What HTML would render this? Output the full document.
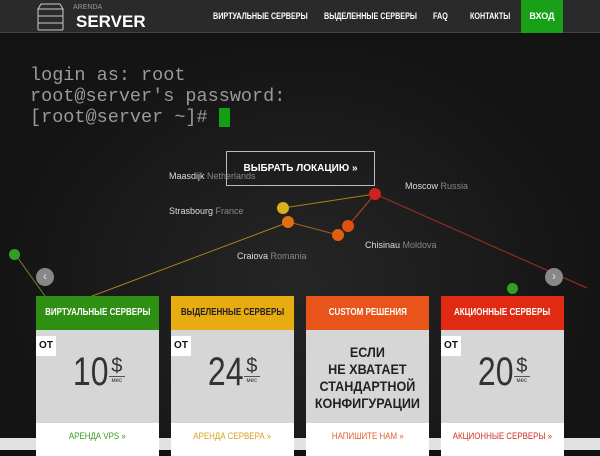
<!DOCTYPE html>
<html><head><meta charset="utf-8"><style>
*{margin:0;padding:0;box-sizing:border-box}
body{width:600px;height:450px;overflow:hidden;background:#111;font-family:"Liberation Sans",sans-serif;position:relative}
.hdr{position:absolute;left:0;top:0;width:600px;height:33px;background:#2a2a2a;border-bottom:1px solid #444}
.nav{position:absolute;top:0;height:33px;line-height:33px;color:#fff;font-weight:bold;font-size:9px;white-space:nowrap;transform:scaleX(.8);transform-origin:left}
.hero{position:absolute;left:0;top:34px;width:600px;height:416px;background:radial-gradient(ellipse at 50% 60%,#262626,#141414 70%)}
.term{position:absolute;left:30px;font-family:"Liberation Mono",monospace;color:#9a9a9a;font-size:18.5px}
.lbl{position:absolute;font-size:9px;color:#ddd;white-space:nowrap}
.lbl span{color:#888}
.dot{position:absolute;width:12px;height:12px;border-radius:50%}
.card{position:absolute;top:296px;width:123px;height:160px;background:#d6d6d6}
.card .h{height:34px;line-height:34px;text-align:center;color:#fff;font-weight:bold;font-size:10px;white-space:nowrap;overflow:hidden}
.card .h span{display:inline-block;transform:scaleX(.8);margin:0 -20px}
.card .f{position:absolute;top:127px;left:0;width:123px;height:33px;background:#fff;text-align:center;font-size:9px;line-height:26px;white-space:nowrap}
.card .f span{display:inline-block;transform:scaleX(.88)}
.ot{position:absolute;left:0;top:40px;width:20px;height:20px;background:#fff;font-weight:bold;font-size:10px;line-height:20px;text-align:center;color:#111}
.price{position:absolute;top:56px;left:0;width:123px;text-align:center;color:#333;white-space:nowrap}
.num{display:inline-block;font-size:40px;transform:scaleX(.8);transform-origin:right;vertical-align:top;line-height:40px;margin-left:-6px}
.dol{display:inline-block;vertical-align:top;width:16px;text-align:center;margin-top:4px}
.dol b{display:block;font-weight:normal;font-size:20px;line-height:20px;border-bottom:1px solid #555}
.dol i{display:block;font-style:normal;font-size:6px;line-height:9px}
.arr{position:absolute;width:18px;height:18px;border-radius:50%;background:#888;color:#ddd;font-size:12px;text-align:center;line-height:17px;top:268px}
</style></head><body>
<div class="hero">
<svg width="600" height="416" style="position:absolute;left:0;top:0">
<g stroke-width="1" fill="none">
<line x1="15" y1="220" x2="55" y2="276" stroke="#6a8a20"/>
<line x1="55" y1="276" x2="289" y2="188" stroke="#a87c20"/>
<line x1="283" y1="174" x2="375" y2="160" stroke="#a88020"/>
<line x1="375" y1="160" x2="348" y2="192" stroke="#c04020"/>
<line x1="375" y1="160" x2="587" y2="254" stroke="#a03020"/>
<line x1="289" y1="188" x2="338" y2="201" stroke="#a06020"/>
</g></svg>
</div>
<div class="hdr">
<svg style="position:absolute;left:37px;top:3px" width="27" height="28" viewBox="0 0 27 28" fill="none" stroke="#ccc" stroke-width="1"><path d="M4 1h19l3 5H1z"/><rect x="1" y="6" width="25" height="7" rx="1"/><rect x="1" y="13" width="25" height="7" rx="1"/><rect x="1" y="20" width="25" height="7" rx="1"/></svg>
<div style="position:absolute;left:73px;top:4px;color:#999;font-size:7px">ARENDA</div>
<div style="position:absolute;left:76px;top:12px;color:#fff;font-weight:bold;font-size:17px">SERVER</div>
<div class="nav" style="left:213px">ВИРТУАЛЬНЫЕ СЕРВЕРЫ</div>
<div class="nav" style="left:324px">ВЫДЕЛЕННЫЕ СЕРВЕРЫ</div>
<div class="nav" style="left:433px">FAQ</div>
<div class="nav" style="left:470px">КОНТАКТЫ</div>
<div style="position:absolute;left:521px;top:0;width:42px;height:33px;background:#18a018;color:#fff;font-weight:bold;font-size:9px;line-height:33px;text-align:center">ВХОД</div>
</div>
<div class="term" style="top:65px">login as: root</div>
<div class="term" style="top:86px">root@server's password:</div>
<div class="term" style="top:107px">[root@server ~]# <span style="display:inline-block;width:11px;height:19px;background:#12a012;vertical-align:middle"></span></div>
<div style="position:absolute;left:226px;top:151px;width:149px;height:35px;border:1px solid #bbb;color:#fff;font-weight:bold;font-size:10px;text-align:center;line-height:33px">ВЫБРАТЬ ЛОКАЦИЮ »</div>
<div class="lbl" style="left:169px;top:171px">Maasdijk <span>Netherlands</span></div>
<div class="lbl" style="left:405px;top:181px">Moscow <span>Russia</span></div>
<div class="lbl" style="left:169px;top:206px">Strasbourg <span>France</span></div>
<div class="lbl" style="left:365px;top:240px">Chisinau <span>Moldova</span></div>
<div class="lbl" style="left:237px;top:251px">Craiova <span>Romania</span></div>
<div class="dot" style="left:277px;top:202px;background:#d8b020"></div>
<div class="dot" style="left:282px;top:216px;background:#e07010"></div>
<div class="dot" style="left:369px;top:188px;background:#d02020"></div>
<div class="dot" style="left:342px;top:220px;background:#e05010"></div>
<div class="dot" style="left:332px;top:229px;background:#e06010"></div>
<div class="dot" style="left:9px;top:249px;width:11px;height:11px;background:#30a020"></div>
<div class="dot" style="left:507px;top:283px;width:11px;height:11px;background:#30a020"></div>
<div class="arr" style="left:36px">‹</div>
<div class="arr" style="left:545px">›</div>
<div style="position:absolute;left:0;top:438px;width:600px;height:12px;background:#e2e2e2"></div>
<div class="card" style="left:36px"><div class="h" style="background:#2e8f12"><span>ВИРТУАЛЬНЫЕ СЕРВЕРЫ</span></div><div class="ot">ОТ</div><div class="price"><span class="num">10</span><span class="dol"><b>$</b><i>мес</i></span></div><div class="f" style="color:#3a9a20"><span>АРЕНДА VPS »</span></div></div>
<div class="card" style="left:171px"><div class="h" style="background:#e6ac10;color:#222"><span>ВЫДЕЛЕННЫЕ СЕРВЕРЫ</span></div><div class="ot">ОТ</div><div class="price"><span class="num">24</span><span class="dol"><b>$</b><i>мес</i></span></div><div class="f" style="color:#d8a020"><span>АРЕНДА СЕРВЕРА »</span></div></div>
<div class="card" style="left:306px"><div class="h" style="background:#e8541a"><span>CUSTOM РЕШЕНИЯ</span></div><div style="position:absolute;top:48px;width:123px;text-align:center;font-weight:bold;font-size:14px;line-height:17px;color:#222;white-space:nowrap"><span style="display:inline-block;transform:scaleX(.9)">ЕСЛИ<br>НЕ ХВАТАЕТ<br>СТАНДАРТНОЙ<br>КОНФИГУРАЦИИ</span></div><div class="f" style="color:#e06030"><span>НАПИШИТЕ НАМ »</span></div></div>
<div class="card" style="left:441px"><div class="h" style="background:#e02a12"><span>АКЦИОННЫЕ СЕРВЕРЫ</span></div><div class="ot">ОТ</div><div class="price"><span class="num">20</span><span class="dol"><b>$</b><i>мес</i></span></div><div class="f" style="color:#d03020"><span>АКЦИОННЫЕ СЕРВЕРЫ »</span></div></div>
</body></html>
